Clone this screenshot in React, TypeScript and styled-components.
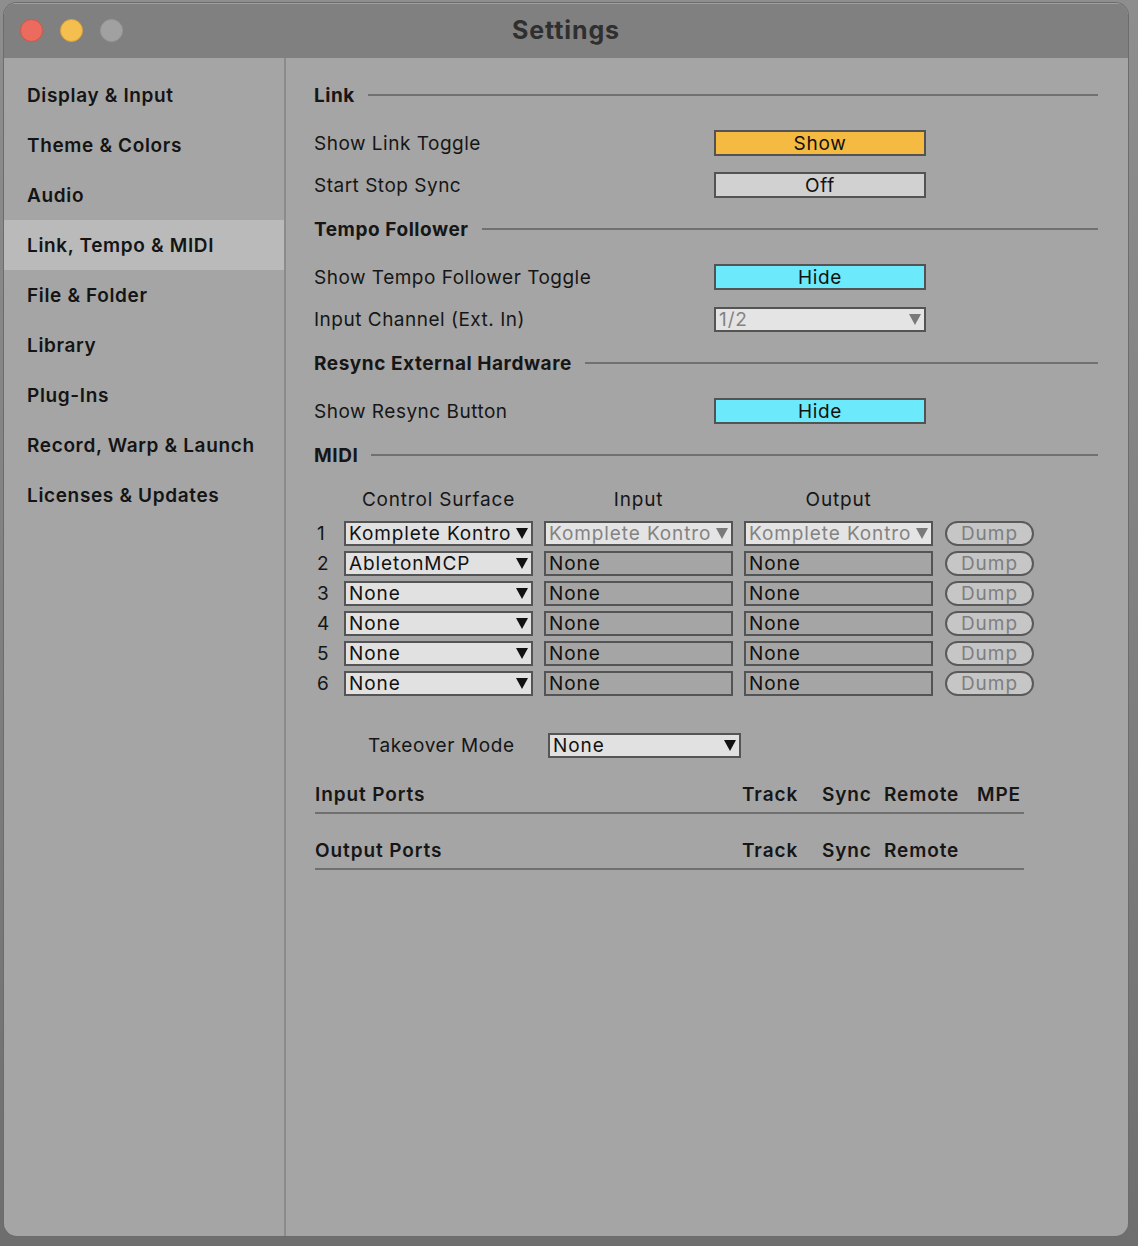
import React from "react";
import styled, { createGlobalStyle } from "styled-components";

const FONT = `"Inter", "Noto Sans", "Liberation Sans", sans-serif`;

const GlobalStyle = createGlobalStyle`
  html, body { margin: 0; padding: 0; }
  body {
    background: #7a7a7a;
    font-family: ${FONT};
    color: #161616;
    -webkit-font-smoothing: antialiased;
  }
`;

const Stage = styled.div`
  width: 1138px;
  height: 1246px;
  box-sizing: border-box;
  padding: 3px 10px 10px 4px;
  background: linear-gradient(180deg, #8e8e8e 0%, #7d7d7d 60%, #6e6e6e 100%);
`;

const Window = styled.div`
  width: 1124px;
  height: 1233px;
  border-radius: 13px;
  overflow: hidden;
  display: flex;
  flex-direction: column;
  box-shadow: 0 0 0 1px #6c6c6c, inset 0 1px 0 #a9a9a9;
`;

const TitleBar = styled.div`
  height: 55px;
  flex: none;
  background: #808080;
  display: grid;
  grid-template-columns: 1fr auto 1fr;
  align-items: center;
  padding: 0 16px;
  box-shadow: inset 0 1px 0 #a0a0a0;
`;

const Lights = styled.div`
  display: flex;
  gap: 17px;
`;

const Light = styled.span<{ $fill: string; $edge: string }>`
  width: 23px;
  height: 23px;
  border-radius: 50%;
  box-sizing: border-box;
  background: ${(p) => p.$fill};
  border: 1px solid ${(p) => p.$edge};
`;

const Title = styled.div`
  font-size: 25px;
  font-weight: 700;
  color: #2f2f2f;
  letter-spacing: 0.9px;
  margin-top: -2px;
`;

const Body = styled.div`
  flex: 1;
  display: flex;
  background: #a5a5a5;
`;

const Sidebar = styled.nav`
  width: 280px;
  flex: none;
  border-right: 2px solid #8b8b8b;
  padding-top: 12px;
`;

const NavItem = styled.div<{ $active?: boolean }>`
  height: 50px;
  display: flex;
  align-items: center;
  padding-left: 23px;
  font-size: 19px;
  font-weight: 600;
  letter-spacing: 0.65px;
  color: #141414;
  background: ${(p) => (p.$active ? "#bababa" : "transparent")};
`;

const Content = styled.main`
  flex: 1;
  padding: 14px 30px 0 28px;
`;

const SectionHeader = styled.div`
  height: 46px;
  margin-bottom: 4px;
  display: flex;
  align-items: center;
  gap: 13px;
  font-size: 19px;
  font-weight: 700;
  letter-spacing: 0.55px;
  &::after {
    content: "";
    flex: 1;
    height: 2px;
    background: #707070;
  }
`;

const SettingRow = styled.div`
  height: 42px;
  display: grid;
  grid-template-columns: 400px 212px;
  align-items: center;
  font-size: 19px;
  letter-spacing: 0.5px;
`;

const Toggle = styled.div<{ $bg: string }>`
  height: 26px;
  box-sizing: border-box;
  border: 2px solid #535353;
  background: ${(p) => p.$bg};
  text-align: center;
  line-height: 23px;
  font-size: 19px;
  letter-spacing: 0.7px;
  color: #111;
`;

type SelectVariant = "active" | "disabled" | "plain";

const SelectBox = styled.div<{ $variant: SelectVariant }>`
  height: 25px;
  box-sizing: border-box;
  border: 2px solid #545454;
  display: flex;
  align-items: center;
  padding: 0 3px 0 3px;
  font-size: 19px;
  line-height: 21px;
  letter-spacing: 0.9px;
  background: ${(p) =>
    p.$variant === "plain" ? "transparent" : p.$variant === "disabled" ? "#e4e4e4" : "#e1e1e1"};
  color: ${(p) => (p.$variant === "disabled" ? "#838383" : "#111")};
`;

const SelectText = styled.span`
  flex: 1;
  white-space: nowrap;
  overflow: hidden;
`;

const Arrow = styled.span<{ $muted?: boolean }>`
  flex: none;
  width: 0;
  height: 0;
  border-left: 6px solid transparent;
  border-right: 6px solid transparent;
  border-top: 11px solid ${(p) => (p.$muted ? "#7a7a7a" : "#111")};
  margin-left: 1px;
`;

const MidiGrid = styled.div`
  display: grid;
  grid-template-columns: 19px 189px 189px 189px 90px;
  grid-auto-rows: 30px;
  grid-template-rows: 36px;
  column-gap: 11px;
  align-items: center;
  font-size: 19px;
  letter-spacing: 0.8px;
`;

const ColHead = styled.div`
  text-align: center;
  padding-bottom: 2px;
`;

const RowNum = styled.div`
  text-align: left;
  padding-left: 3px;
`;

const Dump = styled.div`
  margin-left: 1px;
  height: 25px;
  box-sizing: border-box;
  border: 2px solid #5a5a5a;
  border-radius: 13px;
  background: #c6c6c6;
  color: #7e7e7e;
  text-align: center;
  line-height: 21px;
  font-size: 19px;
  letter-spacing: 1px;
`;

const TakeoverRow = styled.div`
  margin-top: 26px;
  height: 42px;
  display: grid;
  grid-template-columns: 234px 193px;
  align-items: center;
  font-size: 19px;
  letter-spacing: 0.6px;
`;

const TakeoverLabel = styled.div`
  padding-left: 54px;
`;

const PortRow = styled.div<{ $top: number }>`
  width: 709px;
  margin-left: 1px;
  display: grid;
  grid-template-columns: 427px 80px 62px 93px 1fr;
  padding-top: ${(p) => p.$top}px;
  padding-bottom: 5px;
  line-height: 24px;
  border-bottom: 2px solid #6f6f6f;
  font-size: 19px;
  font-weight: 600;
  letter-spacing: 0.9px;
`;

const Select = ({
  text,
  variant,
  arrow = true,
}: {
  text: string;
  variant: SelectVariant;
  arrow?: boolean;
}) => (
  <SelectBox $variant={variant}>
    <SelectText>{text}</SelectText>
    {arrow && <Arrow $muted={variant === "disabled"} />}
  </SelectBox>
);

const navItems = [
  "Display & Input",
  "Theme & Colors",
  "Audio",
  "Link, Tempo & MIDI",
  "File & Folder",
  "Library",
  "Plug-Ins",
  "Record, Warp & Launch",
  "Licenses & Updates",
];

const surfaces = ["Komplete Kontro", "AbletonMCP", "None", "None", "None", "None"];

export default function App() {
  return (
    <>
      <GlobalStyle />
      <Stage>
        <Window>
          <TitleBar>
            <Lights>
              <Light $fill="#ec6b5f" $edge="#d1554a" />
              <Light $fill="#f4bf4f" $edge="#d9a23f" />
              <Light $fill="#a1a1a1" $edge="#979797" />
            </Lights>
            <Title>Settings</Title>
            <span />
          </TitleBar>
          <Body>
            <Sidebar>
              {navItems.map((n) => (
                <NavItem key={n} $active={n === "Link, Tempo & MIDI"}>
                  {n}
                </NavItem>
              ))}
            </Sidebar>
            <Content>
              <SectionHeader>Link</SectionHeader>
              <SettingRow>
                <span>Show Link Toggle</span>
                <Toggle $bg="#f4ba42">Show</Toggle>
              </SettingRow>
              <SettingRow>
                <span>Start Stop Sync</span>
                <Toggle $bg="#d1d1d1">Off</Toggle>
              </SettingRow>
              <SectionHeader>Tempo Follower</SectionHeader>
              <SettingRow>
                <span>Show Tempo Follower Toggle</span>
                <Toggle $bg="#6ce9fb">Hide</Toggle>
              </SettingRow>
              <SettingRow>
                <span>Input Channel (Ext. In)</span>
                <Select text="1/2" variant="disabled" />
              </SettingRow>
              <SectionHeader>Resync External Hardware</SectionHeader>
              <SettingRow>
                <span>Show Resync Button</span>
                <Toggle $bg="#6ce9fb">Hide</Toggle>
              </SettingRow>
              <SectionHeader>MIDI</SectionHeader>
              <MidiGrid>
                <span />
                <ColHead>Control Surface</ColHead>
                <ColHead>Input</ColHead>
                <ColHead>Output</ColHead>
                <span />
                {surfaces.map((s, i) => (
                  <React.Fragment key={i}>
                    <RowNum>{i + 1}</RowNum>
                    <Select text={s} variant="active" />
                    {i === 0 ? (
                      <Select text="Komplete Kontro" variant="disabled" />
                    ) : (
                      <Select text="None" variant="plain" arrow={false} />
                    )}
                    {i === 0 ? (
                      <Select text="Komplete Kontro" variant="disabled" />
                    ) : (
                      <Select text="None" variant="plain" arrow={false} />
                    )}
                    <Dump>Dump</Dump>
                  </React.Fragment>
                ))}
              </MidiGrid>
              <TakeoverRow>
                <TakeoverLabel>Takeover Mode</TakeoverLabel>
                <Select text="None" variant="active" />
              </TakeoverRow>
              <PortRow $top={17}>
                <span>Input Ports</span>
                <span>Track</span>
                <span>Sync</span>
                <span>Remote</span>
                <span>MPE</span>
              </PortRow>
              <PortRow $top={25}>
                <span>Output Ports</span>
                <span>Track</span>
                <span>Sync</span>
                <span>Remote</span>
                <span />
              </PortRow>
            </Content>
          </Body>
        </Window>
      </Stage>
    </>
  );
}
